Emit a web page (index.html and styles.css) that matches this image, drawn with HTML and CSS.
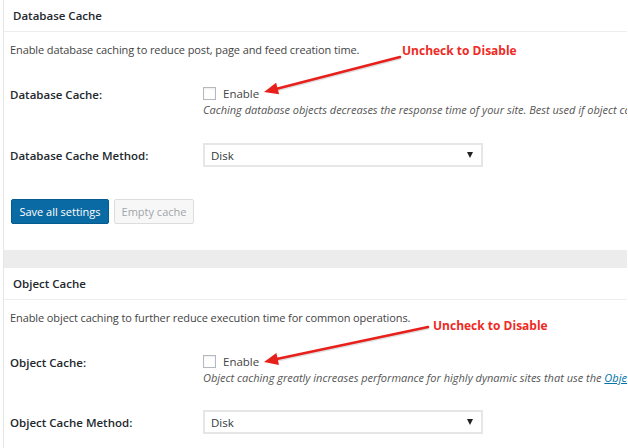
FILE: index.html
```html
<!DOCTYPE html>
<html>
<head>
<meta charset="utf-8">
<link rel="stylesheet" href="styles.css">
</head>
<body>
<div class="page">
  <div class="wrap">
    <section class="postbox first">
      <h3 class="hndle">Database Cache</h3>
      <div class="inside">
        <p class="desc">Enable database caching to reduce post, page and feed creation time.</p>
        <div class="row row-top">
          <div class="label">Database Cache:</div>
          <div class="field">
            <label class="check"><span class="box"></span>Enable</label>
            <div class="note">Caching database objects decreases the response time of your site. Best used if object caching is not possible.</div>
          </div>
        </div>
        <div class="row row-mid">
          <div class="label">Database Cache Method:</div>
          <div class="field">
            <div class="select"><span>Disk</span><span class="caret"></span></div>
          </div>
        </div>
        <div class="buttons">
          <button class="btn primary">Save all settings</button>
          <button class="btn disabled">Empty cache</button>
        </div>
      </div>
    </section>
    <div class="gap"></div>
    <section class="postbox second">
      <h3 class="hndle">Object Cache</h3>
      <div class="inside">
        <p class="desc">Enable object caching to further reduce execution time for common operations.</p>
        <div class="row row-top">
          <div class="label">Object Cache:</div>
          <div class="field">
            <label class="check"><span class="box"></span>Enable</label>
            <div class="note">Object caching greatly increases performance for highly dynamic sites that use the <a href="#">Object Cache API</a>.</div>
          </div>
        </div>
        <div class="row row-mid">
          <div class="label">Object Cache Method:</div>
          <div class="field">
            <div class="select"><span>Disk</span><span class="caret"></span></div>
          </div>
        </div>
      </div>
    </section>
  </div>
  <svg class="arrows" width="628" height="448" viewBox="0 0 628 448">
    <g class="shadow">
      <line x1="400" y1="58.5" x2="272" y2="91.5"/>
      <line x1="428" y1="328.5" x2="272" y2="361.5"/>
    </g>
    <g class="red">
      <line x1="400" y1="57" x2="272" y2="90"/>
      <polygon points="264,92 279.1,94.3 276.1,82.7"/>
      <line x1="428" y1="327" x2="272" y2="360"/>
      <polygon points="264,362 279,364.9 276.4,353.1"/>
    </g>
  </svg>
  <span class="callout c1">Uncheck to Disable</span>
  <span class="callout c2">Uncheck to Disable</span>
</div>
</body>
</html>
```

FILE: styles.css
```css
html, body {
  margin: 0;
  padding: 0;
  background: #fff;
}
body {
  font-family: "Open Sans", "Noto Sans", sans-serif;
  color: #23282d;
  overflow: hidden;
}
.page {
  position: relative;
  width: 628px;
  height: 448px;
  overflow: hidden;
}
.wrap {
  margin-left: 3px;
  width: 623px;
  border-left: 1px solid #e5e5e5;
  overflow: hidden;
}
.postbox {
  background: #fff;
}
.hndle {
  margin: 0;
  height: 31px;
  line-height: 31px;
  padding: 0 9px;
  font-size: 11.5px;
  font-weight: 600;
  color: #23282d;
  border-bottom: 1px solid #eeeeee;
}
.inside {
  padding: 0 6px 26px;
}
.desc {
  margin: 9px 0 0;
  height: 18px;
  line-height: 18px;
  font-size: 11px;
  letter-spacing: -0.1px;
  color: #444;
  white-space: nowrap;
}
.row {
  display: grid;
  grid-template-columns: 193px 1fr;
}
.row-top {
  margin-top: 26px;
}
.row-mid {
  margin-top: 25px;
  align-items: center;
}
.second .row-mid {
  margin-top: 24px;
}
.label {
  font-size: 11.5px;
  font-weight: 600;
  color: #23282d;
  line-height: 17px;
  white-space: nowrap;
}
.row-top .label {
  margin-top: 1px;
}
.field {
  min-width: 0;
}
.check {
  display: flex;
  align-items: center;
  height: 17px;
  font-size: 11.5px;
  color: #444;
}
.box {
  width: 13px;
  height: 13px;
  box-sizing: border-box;
  border: 1px solid #b4b9be;
  background: #fff;
  margin-right: 7px;
  box-shadow: inset 0 1px 2px rgba(0,0,0,0.08);
}
.note {
  font-size: 11px;
  font-style: italic;
  color: #555;
  line-height: 16px;
  white-space: nowrap;
}
.note a {
  color: #0073aa;
}
.select {
  width: 280px;
  height: 24px;
  box-sizing: border-box;
  border: 2px solid #e6e6e6;
  background: #fff;
  display: flex;
  align-items: center;
  justify-content: space-between;
  padding: 0 6px 0 6px;
  font-size: 11.5px;
  color: #32373c;
}
.caret {
  width: 0;
  height: 0;
  border-left: 3.5px solid transparent;
  border-right: 3.5px solid transparent;
  border-top: 6px solid #222;
  margin-right: 2px;
}
.buttons {
  margin-top: 32px;
  display: flex;
  gap: 5px;
  padding-left: 1px;
}
.btn {
  height: 25px;
  box-sizing: border-box;
  font-family: "Open Sans", "Noto Sans", sans-serif;
  font-size: 11px;
  padding: 0;
  border-radius: 2px;
  line-height: 23px;
  white-space: nowrap;
  text-align: center;
}
.primary {
  background: #0a6aa3;
  border: 1px solid #065c8f;
  color: #fff;
  width: 98px;
}
.disabled {
  background: #f7f7f7;
  border: 1px solid #dddddd;
  color: #a0a5aa;
  width: 80px;
}
.gap {
  height: 18px;
  background: #ececec;
}
.arrows {
  position: absolute;
  left: 0;
  top: 0;
}
.arrows line {
  stroke-width: 2.6;
  stroke-linecap: round;
}
.red line {
  stroke: #e8201c;
}
.red polygon {
  fill: #e8201c;
}
.shadow line {
  stroke: rgba(0,0,0,0.12);
}
.callout {
  position: absolute;
  font-family: "Open Sans", "Noto Sans", sans-serif;
  font-weight: 700;
  font-size: 12px;
  color: #ee2a24;
  line-height: 16px;
  white-space: nowrap;
}
.c1 { left: 402px; top: 43px; }
.c2 { left: 433px; top: 318px; }
```
